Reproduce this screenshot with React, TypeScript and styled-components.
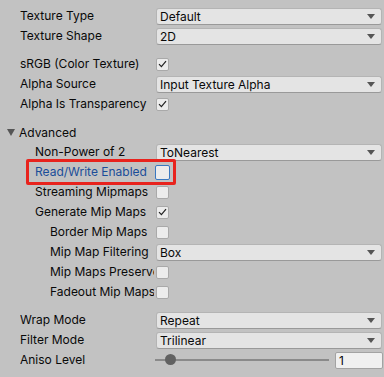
import React from "react";
import styled, { createGlobalStyle } from "styled-components";

const GlobalStyle = createGlobalStyle`
  html, body {
    margin: 0;
    padding: 0;
    background: #c2c2c2;
  }
  body {
    font-family: Inter, "Noto Sans", "Liberation Sans", sans-serif;
    font-size: 12px;
    color: #090909;
  }
`;

const Inspector = styled.div`
  width: 384px;
  height: 377px;
  box-sizing: border-box;
  padding: 6px 2px 0 0;
  display: flex;
  flex-direction: column;
  gap: 8px;
`;

const Group = styled.div`
  display: flex;
  flex-direction: column;
`;

const Row = styled.div`
  position: relative;
  height: 20px;
  display: flex;
  align-items: center;
`;

const Label = styled.div<{ $indent?: number; $focused?: boolean }>`
  flex: 0 0 ${(p) => 134 - (p.$indent ?? 0) * 15}px;
  margin-left: ${(p) => 20 + (p.$indent ?? 0) * 15}px;
  margin-right: 2px;
  white-space: nowrap;
  overflow: hidden;
  color: ${(p) => (p.$focused ? "#1a4d99" : "#090909")};
  line-height: 20px;
`;

const Value = styled.div`
  flex: 1;
  min-width: 0;
  display: flex;
  align-items: center;
`;

const Dropdown = styled.div`
  flex: 1;
  height: 17px;
  box-sizing: border-box;
  display: flex;
  align-items: center;
  justify-content: space-between;
  padding: 0 6px 0 3px;
  background: #e4e4e4;
  border: 1px solid #b4b4b4;
  border-bottom-color: #999999;
  border-radius: 3px;
  line-height: 15px;
`;

const Arrow = styled.span`
  width: 0;
  height: 0;
  border-left: 4px solid transparent;
  border-right: 4px solid transparent;
  border-top: 5px solid #555555;
`;

const Check = styled.div<{ $focused?: boolean }>`
  width: 13px;
  height: 13px;
  box-sizing: border-box;
  margin-left: ${(p) => (p.$focused ? "-1px" : "0")};
  border: 1px solid ${(p) => (p.$focused ? "#3a78c0" : "#a9a9a9")};
  ${(p) => (p.$focused ? "width: 15px; height: 15px;" : "")}
  background: #ececec;
  border-radius: 2px;
  display: flex;
  align-items: center;
  justify-content: center;
`;

const Foldout = styled.div`
  display: flex;
  align-items: center;
  gap: 4px;
  padding-left: 7px;
  height: 20px;
`;

const FoldArrow = styled.span`
  width: 0;
  height: 0;
  border-left: 4.5px solid transparent;
  border-right: 4.5px solid transparent;
  border-top: 7px solid #555555;
`;

const Highlight = styled.div`
  position: absolute;
  left: 26px;
  top: -3px;
  width: 150px;
  height: 26px;
  box-sizing: border-box;
  border: 3px solid #e8231d;
  border-radius: 2px;
  pointer-events: none;
`;

const SliderTrack = styled.div`
  position: relative;
  width: 174px;
  height: 2px;
  margin-left: -1px;
  background: #8a8a8a;
`;

const Thumb = styled.div`
  position: absolute;
  top: -5px;
  width: 11px;
  height: 11px;
  border-radius: 50%;
  background: #616161;
`;

const NumberField = styled.div`
  margin-left: auto;
  width: 48px;
  height: 17px;
  box-sizing: border-box;
  margin-right: -1px;
  padding-left: 3px;
  background: #f0f0f0;
  border: 1px solid #a3a3a3;
  border-radius: 2px;
  line-height: 15px;
`;

const CheckMark = () => (
  <svg width="9" height="8" viewBox="0 0 9 8">
    <path d="M1 4.2 L3.4 6.6 L8 1.2" fill="none" stroke="#222" strokeWidth="1.2" />
  </svg>
);

const DropRow = ({ label, value, indent }: { label: string; value: string; indent?: number }) => (
  <Row>
    <Label $indent={indent}>{label}</Label>
    <Value>
      <Dropdown>
        <span>{value}</span>
        <Arrow />
      </Dropdown>
    </Value>
  </Row>
);

const CheckRow = ({ label, checked, indent }: { label: string; checked?: boolean; indent?: number }) => (
  <Row>
    <Label $indent={indent}>{label}</Label>
    <Value>
      <Check>{checked && <CheckMark />}</Check>
    </Value>
  </Row>
);

export default function App() {
  const aniso = 1;
  return (
    <>
      <GlobalStyle />
      <Inspector>
        <Group>
          <DropRow label="Texture Type" value="Default" />
          <DropRow label="Texture Shape" value="2D" />
        </Group>
        <Group>
          <CheckRow label="sRGB (Color Texture)" checked />
          <DropRow label="Alpha Source" value="Input Texture Alpha" />
          <CheckRow label="Alpha Is Transparency" checked />
        </Group>
        <Group>
          <Foldout>
            <FoldArrow />
            <span>Advanced</span>
          </Foldout>
          <DropRow label="Non-Power of 2" value="ToNearest" indent={1} />
          <Row>
            <Label $indent={1} $focused>
              Read/Write Enabled
            </Label>
            <Value>
              <Check $focused />
            </Value>
            <Highlight />
          </Row>
          <CheckRow label="Streaming Mipmaps" indent={1} />
          <CheckRow label="Generate Mip Maps" checked indent={1} />
          <CheckRow label="Border Mip Maps" indent={2} />
          <DropRow label="Mip Map Filtering" value="Box" indent={2} />
          <CheckRow label="Mip Maps Preserve Coverage" indent={2} />
          <CheckRow label="Fadeout Mip Maps" indent={2} />
        </Group>
        <Group>
          <DropRow label="Wrap Mode" value="Repeat" />
          <DropRow label="Filter Mode" value="Trilinear" />
          <Row>
            <Label>Aniso Level</Label>
            <Value>
              <SliderTrack>
                <Thumb style={{ left: `${(aniso / 16) * 163}px` }} />
              </SliderTrack>
              <NumberField>{aniso}</NumberField>
            </Value>
          </Row>
        </Group>
      </Inspector>
    </>
  );
}
